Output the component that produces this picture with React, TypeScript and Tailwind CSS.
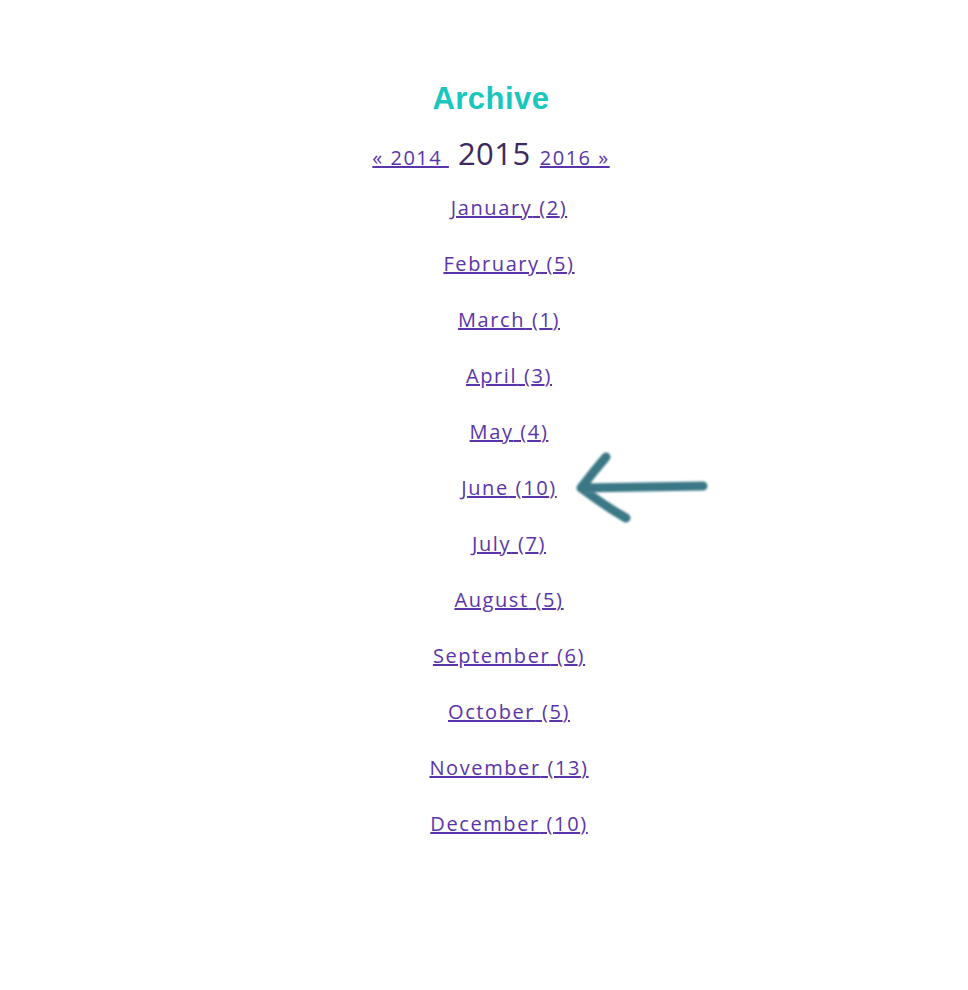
import React from "react";

const months = [
  { name: "January", count: 2 },
  { name: "February", count: 5 },
  { name: "March", count: 1 },
  { name: "April", count: 3 },
  { name: "May", count: 4 },
  { name: "June", count: 10 },
  { name: "July", count: 7 },
  { name: "August", count: 5 },
  { name: "September", count: 6 },
  { name: "October", count: 5 },
  { name: "November", count: 13 },
  { name: "December", count: 10 },
];

// hand-drawn pointer next to the current month
const Pointer = () => (
  <svg
    className="absolute left-full top-1/2 ml-[14px] -translate-y-1/2 blur-[1.2px]"
    width="148"
    height="80"
    viewBox="0 0 148 80"
  >
    <path
      d="M10 40 Q70 39 132 38 M10 40 Q22 24 35 9 M10 40 Q34 58 55 70"
      fill="none"
      stroke="#3b7886"
      strokeWidth="9"
      strokeLinecap="round"
    />
  </svg>
);

export default function App() {
  return (
    <div className="min-h-[990px] bg-white flex flex-col items-center pt-[80px] font-['Open_Sans',sans-serif]">
      <div className="pl-[14px] flex flex-col items-center">
        <h2 className="text-[31px] leading-[38px] font-bold tracking-[0.5px] text-[#19c7bf] font-['Liberation_Sans',Arial,sans-serif]">
          Archive
        </h2>
        <div className="mt-[20px] flex items-baseline text-[#5a35a9]">
          <a href="#" className="underline text-[20px] tracking-[1.5px]">
            « 2014&nbsp;
          </a>
          <span className="mx-[9px] text-[31px] leading-[30px] tracking-[0.5px] text-[#3d2a5c]">
            2015
          </span>
          <a href="#" className="underline text-[20px] tracking-[1.5px]">
            2016 »
          </a>
        </div>
      </div>
      <ul className="pl-[50px] mt-[21px] flex flex-col items-center gap-[28px]">
        {months.map((m) => (
          <li
            key={m.name}
            className="relative h-[28px] text-[20px] leading-[28px] tracking-[1.6px]"
          >
            <a href="#" className="underline text-[#5a35a9]">
              {m.name} ({m.count})
            </a>
            {m.name === "June" && <Pointer />}
          </li>
        ))}
      </ul>
    </div>
  );
}
